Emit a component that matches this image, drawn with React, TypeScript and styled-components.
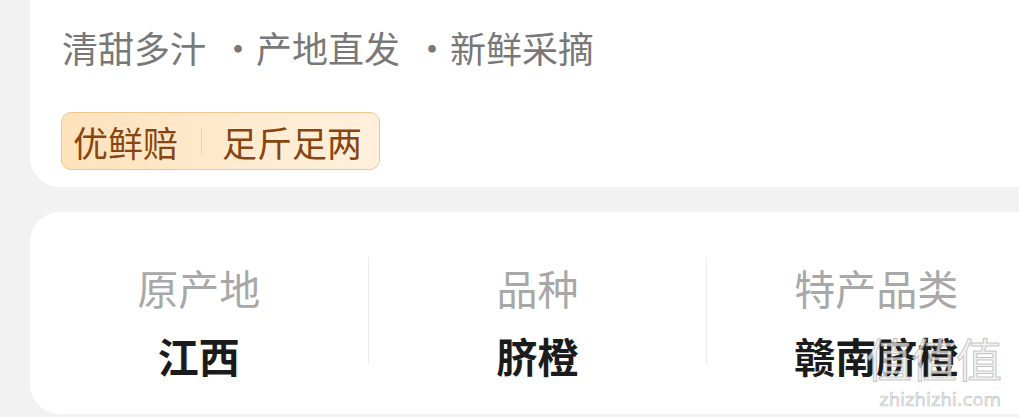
import React from "react";
import styled, { createGlobalStyle } from "styled-components";

const Global = createGlobalStyle`
  html, body {
    margin: 0;
    padding: 0;
    background: #f2f2f2;
    overflow: hidden;
  }
  body {
    font-family: "Noto Sans CJK SC", "Noto Sans", sans-serif;
  }
`;

const Page = styled.div`
  position: relative;
  width: 1019px;
  height: 417px;
  overflow: hidden;
  background: #f2f2f2;
`;

const Card = styled.section`
  box-sizing: border-box;
  width: 1015px;
  margin-left: 30px;
  background: #ffffff;
  border-radius: 30px;
`;

const SummaryCard = styled(Card)`
  margin-top: -30px;
  padding: 59px 31px 17px 32px;
`;

const Features = styled.div`
  display: flex;
  align-items: center;
  font-size: 36px;
  line-height: 36px;
  color: #787878;
  white-space: nowrap;
`;

const Sep = styled.span`
  margin-left: 14px;
`;

const Badge = styled.div`
  box-sizing: border-box;
  margin-top: 47px;
  margin-left: -1px;
  height: 58px;
  width: 319px;
  display: flex;
  align-items: center;
  padding: 0 14px 0 11px;
  border: 1px solid #f0c68f;
  border-radius: 10px;
  background: linear-gradient(90deg, #fde2bb 0%, #fee9cc 45%, #fff0dd 100%);
  color: #88450f;
  font-size: 35px;
  line-height: 35px;
  white-space: nowrap;
`;

const BadgeDivider = styled.span`
  width: 1px;
  height: 27px;
  margin: 0 20px 0 23px;
  background: #efd0a8;
`;

const SpecCard = styled(Card)`
  margin-top: 25px;
  height: 202px;
  padding-top: 45px;
`;

const SpecRow = styled.div`
  display: flex;
  align-items: flex-start;
`;

const SpecCol = styled.div`
  flex: 1;
  display: flex;
  flex-direction: column;
  align-items: center;
  padding-top: 10px;
`;

const SpecDivider = styled.div`
  width: 1px;
  height: 107px;
  background: #ececec;
  flex: none;
`;

const SpecLabel = styled.div`
  font-size: 41px;
  line-height: 40px;
  color: #a8a8a8;
  white-space: nowrap;
`;

const SpecValue = styled.div`
  margin-top: 28px;
  font-size: 41px;
  line-height: 40px;
  font-weight: 700;
  color: #1b1b1b;
  white-space: nowrap;
`;

const Watermark = styled.div`
  position: absolute;
  left: 866px;
  top: 332px;
  display: flex;
  flex-direction: column;
  align-items: flex-end;
  pointer-events: none;
`;

const WatermarkMark = styled.div`
  font-size: 46px;
  line-height: 50px;
  color: rgba(238, 238, 238, 0.72);
  -webkit-text-stroke: 1px rgba(150, 150, 150, 0.55);
  letter-spacing: -1px;
  white-space: nowrap;
`;

const WatermarkUrl = styled.div`
  font-family: "DejaVu Sans", sans-serif;
  font-size: 18px;
  line-height: 16px;
  margin-top: 10px;
  color: rgba(235, 235, 235, 0.8);
  -webkit-text-stroke: 0.6px rgba(150, 150, 150, 0.6);
  white-space: nowrap;
`;

const specs = [
  { label: "原产地", value: "江西" },
  { label: "品种", value: "脐橙" },
  { label: "特产品类", value: "赣南脐橙" },
];

const features = ["清甜多汁", "产地直发", "新鲜采摘"];

export default function App() {
  return (
    <Page>
      <Global />
      <SummaryCard>
        <Features>
          {features.map((f, i) => (
            <React.Fragment key={f}>
              {i > 0 && <Sep>・</Sep>}
              <span>{f}</span>
            </React.Fragment>
          ))}
        </Features>
        <Badge>
          <span>优鲜赔</span>
          <BadgeDivider />
          <span>足斤足两</span>
        </Badge>
      </SummaryCard>
      <SpecCard>
        <SpecRow>
          {specs.map((s, i) => (
            <React.Fragment key={s.label}>
              {i > 0 && <SpecDivider />}
              <SpecCol>
                <SpecLabel>{s.label}</SpecLabel>
                <SpecValue>{s.value}</SpecValue>
              </SpecCol>
            </React.Fragment>
          ))}
        </SpecRow>
      </SpecCard>
      <Watermark>
        <WatermarkMark>值值值</WatermarkMark>
        <WatermarkUrl>zhizhizhi.com</WatermarkUrl>
      </Watermark>
    </Page>
  );
}
